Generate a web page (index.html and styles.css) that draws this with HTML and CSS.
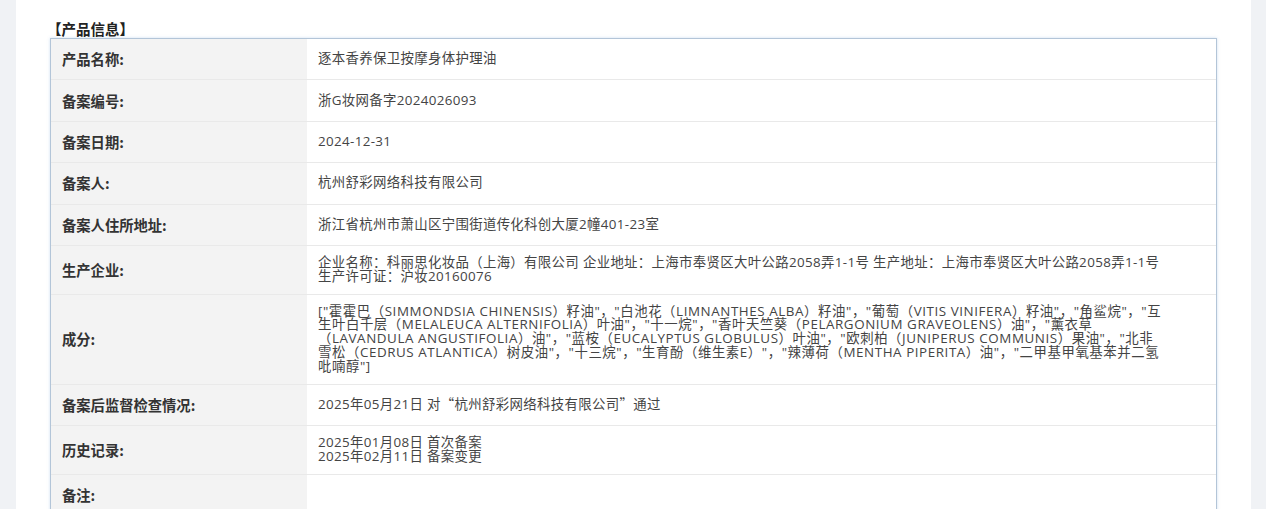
FILE: index.html
```html
<!DOCTYPE html>
<html lang="zh-CN">
<head>
<meta charset="utf-8">
<title>产品信息</title>
<link rel="stylesheet" href="styles.css">
</head>
<body>
<div class="page">
  <div class="panel">
    <div class="section-title">【产品信息】</div>
    <div class="info-table">
      <div class="row">
        <div class="label">产品名称:</div>
        <div class="value">逐本香养保卫按摩身体护理油</div>
      </div>
      <div class="row">
        <div class="label">备案编号:</div>
        <div class="value">浙G妆网备字2024026093</div>
      </div>
      <div class="row">
        <div class="label">备案日期:</div>
        <div class="value">2024-12-31</div>
      </div>
      <div class="row">
        <div class="label">备案人:</div>
        <div class="value">杭州舒彩网络科技有限公司</div>
      </div>
      <div class="row">
        <div class="label">备案人住所地址:</div>
        <div class="value">浙江省杭州市萧山区宁围街道传化科创大厦2幢401-23室</div>
      </div>
      <div class="row">
        <div class="label">生产企业:</div>
        <div class="value"><div class="text"><span class="line">企业名称：科丽思化妆品（上海）有限公司 企业地址：上海市奉贤区大叶公路2058弄1-1号 生产地址：上海市奉贤区大叶公路2058弄1-1号</span><span class="line">生产许可证：沪妆20160076</span></div></div>
      </div>
      <div class="row">
        <div class="label">成分:</div>
        <div class="value"><div class="text ingredients"><span class="line">["霍霍巴（SIMMONDSIA CHINENSIS）籽油"，"白池花（LIMNANTHES ALBA）籽油"，"葡萄（VITIS VINIFERA）籽油"，"角鲨烷"，"互</span><span class="line">生叶白千层（MELALEUCA ALTERNIFOLIA）叶油"，"十一烷"，"香叶天竺葵（PELARGONIUM GRAVEOLENS）油"，"薰衣草</span><span class="line">（LAVANDULA ANGUSTIFOLIA）油"，"蓝桉（EUCALYPTUS GLOBULUS）叶油"，"欧刺柏（JUNIPERUS COMMUNIS）果油"，"北非</span><span class="line">雪松（CEDRUS ATLANTICA）树皮油"，"十三烷"，"生育酚（维生素E）"，"辣薄荷（MENTHA PIPERITA）油"，"二甲基甲氧基苯并二氢</span><span class="line">吡喃醇"]</span></div></div>
      </div>
      <div class="row">
        <div class="label">备案后监督检查情况:</div>
        <div class="value"><span class="text">2025年05月21日 对<span class="cjk">“</span>杭州舒彩网络科技有限公司<span class="cjk">”</span>通过</span></div>
      </div>
      <div class="row">
        <div class="label">历史记录:</div>
        <div class="value"><div class="text"><span class="line">2025年01月08日 首次备案</span><span class="line">2025年02月11日 备案变更</span></div></div>
      </div>
      <div class="row">
        <div class="label">备注:</div>
        <div class="value"></div>
      </div>
    </div>
  </div>
</div>
</body>
</html>
```
FILE: styles.css
```css
html, body {
  margin: 0;
  padding: 0;
}
body {
  background: #f0f2f5;
  font-family: "Open Sans", "Noto Sans CJK SC", sans-serif;
  color: #333;
}
.page {
  padding: 0 15px 0 16px;
}
.panel {
  background: #fff;
  padding: 20px 34px 40px 34px;
}
.section-title {
  font-family: "Noto Sans CJK SC", sans-serif;
  font-weight: bold;
  font-size: 14.5px;
  line-height: 18px;
  color: #222;
  margin-left: -3px;
}
.info-table {
  border: 1px solid #b3c5d8;
  box-shadow: 0 0 3px rgba(120, 170, 220, 0.35);
}
.row {
  display: grid;
  grid-template-columns: 256px 1fr;
  border-bottom: 1px solid #e9e9e9;
}
.row:last-child {
  border-bottom: none;
}
.label,
.value {
  box-sizing: border-box;
  min-height: 40.4px;
  padding: 10px 11px;
  display: flex;
  align-items: center;
}
.label {
  background: #f3f3f3;
  font-family: "Noto Sans CJK SC", sans-serif;
  font-weight: bold;
  font-size: 14.3px;
  line-height: 14px;
  color: #333;
}
.value {
  font-size: 13.4px;
  letter-spacing: 0.35px;
  line-height: 13.8px;
  color: #444;
  white-space: nowrap;
}
.text {
  display: block;
}
.ingredients {
  letter-spacing: 0.57px;
}
.line {
  display: block;
  height: 13.8px;
}
.cjk {
  font-family: "Noto Sans CJK SC", sans-serif;
}
```
